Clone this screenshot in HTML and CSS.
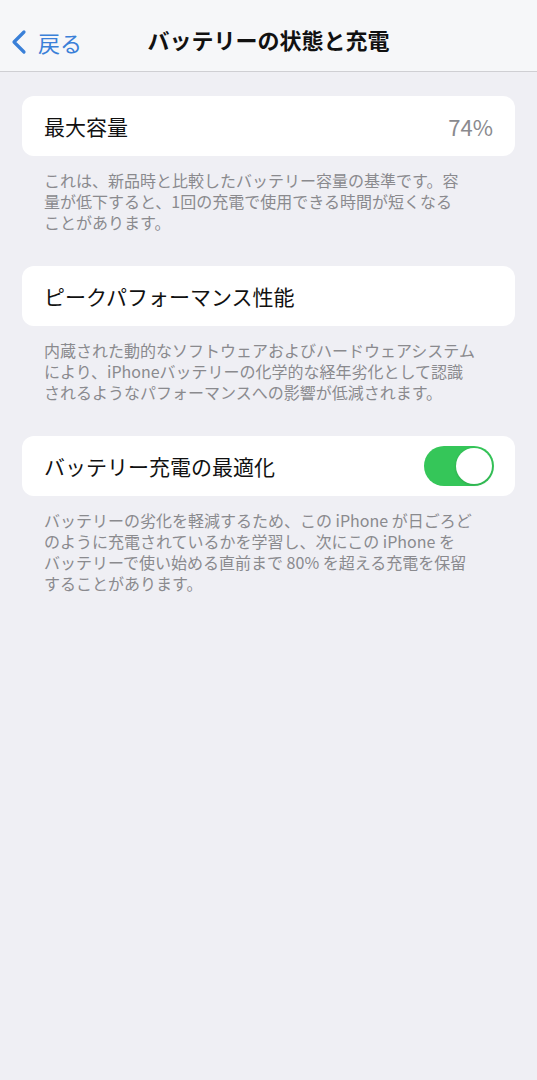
FILE: index.html
```html
<!DOCTYPE html>
<html lang="ja">
<head>
    <meta charset="utf-8">
    <title>バッテリーの状態と充電</title>
    <link rel="stylesheet" href="styles.css">
</head>
<body>
    <!-- Top Navigation Bar -->
    <header class="navbar">
        <a class="back-link" href="#">
            <svg class="chevron" width="20" height="26" viewBox="0 0 20 26">
                <path d="M15 3 L5 13 L15 23" fill="none" stroke="#3a80d8" stroke-width="3.2" stroke-linecap="round" stroke-linejoin="round"/>
            </svg>
            <span>戻る</span>
        </a>
        <h1 class="nav-title">バッテリーの状態と充電</h1>
    </header>

    <main class="content">
        <section class="group">
            <div class="cell">
                <span class="cell-label">最大容量</span>
                <span class="cell-value">74%</span>
            </div>
            <p class="note">これは、新品時と比較したバッテリー容量の基準です。容<br>量が低下すると、1回の充電で使用できる時間が短くなる<br>ことがあります。</p>
        </section>

        <section class="group">
            <div class="cell">
                <span class="cell-label">ピークパフォーマンス性能</span>
            </div>
            <p class="note">内蔵された動的なソフトウェアおよびハードウェアシステム<br>により、iPhoneバッテリーの化学的な経年劣化として認識<br>されるようなパフォーマンスへの影響が低減されます。</p>
        </section>

        <section class="group">
            <div class="cell">
                <span class="cell-label">バッテリー充電の最適化</span>
                <label class="switch">
                    <input type="checkbox" checked>
                    <span class="knob"></span>
                </label>
            </div>
            <p class="note">バッテリーの劣化を軽減するため、この iPhone が日ごろど<br>のように充電されているかを学習し、次にこの iPhone を<br>バッテリーで使い始める直前まで 80% を超える充電を保留<br>することがあります。</p>
        </section>
    </main>
</body>
</html>
```

FILE: styles.css
```css
/* General Styles */
body {
    font-family: "Noto Sans CJK JP", "Noto Sans", sans-serif;
    background-color: #efeff4;
    margin: 0;
    padding: 0;
    color: #111;
}

/* Navigation Bar */
.navbar {
    position: relative;
    height: 65px;
    padding-top: 6px;
    display: flex;
    align-items: center;
    justify-content: center;
    background: #f6f7f9;
    border-bottom: 1px solid #cfcfd3;
}

.back-link {
    position: absolute;
    left: 9px;
    top: 29px;
    display: flex;
    align-items: center;
    gap: 9px;
    color: #3a80d8;
    text-decoration: none;
    font-size: 22px;
    line-height: 26px;
}

.chevron {
    display: block;
}

.nav-title {
    margin: 0;
    font-size: 22px;
    font-weight: bold;
    color: #111;
}

/* Content area */
.content {
    padding: 24px 22px 0;
}

.group {
    margin-bottom: 33px;
}

.cell {
    height: 60px;
    background: #fff;
    border-radius: 12px;
    display: flex;
    align-items: center;
    justify-content: space-between;
    padding: 0 22px;
}

.cell-label {
    font-size: 21px;
}

.cell-value {
    font-size: 22px;
    color: #8a8a8e;
}

.note {
    margin: 0;
    padding: 14px 22px 0;
    font-size: 16px;
    line-height: 21px;
    color: #8a8a8e;
}

/* Toggle switch */
.switch {
    position: relative;
    width: 70px;
    height: 40px;
    margin-right: -1px;
}

.switch input {
    display: none;
}

.knob {
    position: absolute;
    inset: 0;
    border-radius: 20px;
    background: #35c659;
}

.knob::after {
    content: "";
    position: absolute;
    right: 2px;
    top: 2px;
    width: 36px;
    height: 36px;
    border-radius: 50%;
    background: #fff;
    box-shadow: 0 1px 3px rgba(0, 0, 0, 0.15);
}
```
